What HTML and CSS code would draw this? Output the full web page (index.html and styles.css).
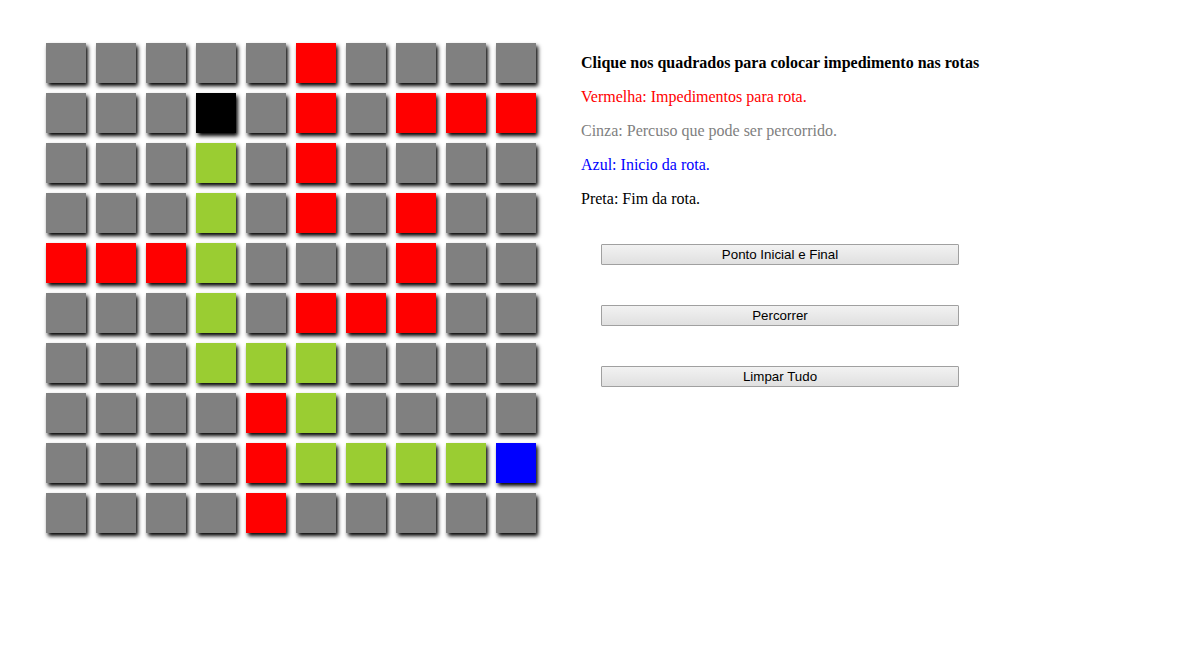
FILE: index.html
```html
<!DOCTYPE html>
<html>
<head>
<meta charset="utf-8">
<link rel="stylesheet" href="styles.css">
</head>
<body>
<div class="page">
  <div class="grid">
    <div class="cell g"></div><div class="cell g"></div><div class="cell g"></div><div class="cell g"></div><div class="cell g"></div><div class="cell r"></div><div class="cell g"></div><div class="cell g"></div><div class="cell g"></div><div class="cell g"></div>
    <div class="cell g"></div><div class="cell g"></div><div class="cell g"></div><div class="cell k"></div><div class="cell g"></div><div class="cell r"></div><div class="cell g"></div><div class="cell r"></div><div class="cell r"></div><div class="cell r"></div>
    <div class="cell g"></div><div class="cell g"></div><div class="cell g"></div><div class="cell p"></div><div class="cell g"></div><div class="cell r"></div><div class="cell g"></div><div class="cell g"></div><div class="cell g"></div><div class="cell g"></div>
    <div class="cell g"></div><div class="cell g"></div><div class="cell g"></div><div class="cell p"></div><div class="cell g"></div><div class="cell r"></div><div class="cell g"></div><div class="cell r"></div><div class="cell g"></div><div class="cell g"></div>
    <div class="cell r"></div><div class="cell r"></div><div class="cell r"></div><div class="cell p"></div><div class="cell g"></div><div class="cell g"></div><div class="cell g"></div><div class="cell r"></div><div class="cell g"></div><div class="cell g"></div>
    <div class="cell g"></div><div class="cell g"></div><div class="cell g"></div><div class="cell p"></div><div class="cell g"></div><div class="cell r"></div><div class="cell r"></div><div class="cell r"></div><div class="cell g"></div><div class="cell g"></div>
    <div class="cell g"></div><div class="cell g"></div><div class="cell g"></div><div class="cell p"></div><div class="cell p"></div><div class="cell p"></div><div class="cell g"></div><div class="cell g"></div><div class="cell g"></div><div class="cell g"></div>
    <div class="cell g"></div><div class="cell g"></div><div class="cell g"></div><div class="cell g"></div><div class="cell r"></div><div class="cell p"></div><div class="cell g"></div><div class="cell g"></div><div class="cell g"></div><div class="cell g"></div>
    <div class="cell g"></div><div class="cell g"></div><div class="cell g"></div><div class="cell g"></div><div class="cell r"></div><div class="cell p"></div><div class="cell p"></div><div class="cell p"></div><div class="cell p"></div><div class="cell b"></div>
    <div class="cell g"></div><div class="cell g"></div><div class="cell g"></div><div class="cell g"></div><div class="cell r"></div><div class="cell g"></div><div class="cell g"></div><div class="cell g"></div><div class="cell g"></div><div class="cell g"></div>
  </div>
  <div class="panel">
    <p class="title">Clique nos quadrados para colocar impedimento nas rotas</p>
    <p class="red">Vermelha: Impedimentos para rota.</p>
    <p class="gray">Cinza: Percuso que pode ser percorrido.</p>
    <p class="blue">Azul: Inicio da rota.</p>
    <p class="black">Preta: Fim da rota.</p>
    <div class="actions">
      <button class="btn">Ponto Inicial e Final</button>
      <button class="btn">Percorrer</button>
      <button class="btn">Limpar Tudo</button>
    </div>
  </div>
</div>
</body>
</html>
```
FILE: styles.css
```css
html, body {
  margin: 0;
  padding: 0;
  background: #fff;
}
body {
  font-family: "Liberation Serif", "Times New Roman", serif;
  font-size: 16px;
  color: #000;
  min-height: 660px;
}
.page {
  display: flex;
  align-items: flex-start;
  padding: 38px 0 40px 46px;
}
.grid {
  margin-top: 5px;
  display: grid;
  grid-template-columns: repeat(10, 40px);
  grid-auto-rows: 40px;
  gap: 10px;
}
.cell {
  width: 40px;
  height: 40px;
  box-shadow: 2px 3px 4px #000;
}
.g { background: #808080; }
.r { background: #ff0000; }
.p { background: #9acd32; }
.k { background: #000000; }
.b { background: #0000ff; }
.panel {
  margin-left: 45px;
  width: 420px;
}
.panel p {
  margin: 16px 0;
  line-height: 18px;
}
.title { font-weight: bold; }
.red { color: #ff0000; }
.gray { color: #808080; }
.blue { color: #0000ff; }
.black { color: #000; }
.actions {
  display: flex;
  flex-direction: column;
  gap: 40px;
  padding: 20px 0 0 20px;
}
.btn {
  display: block;
  width: 358px;
  height: 21px;
  margin: 0;
  padding: 0;
  font-family: "Liberation Sans", Arial, sans-serif;
  font-size: 13.33px;
  color: #000;
  border: 1px solid #a0a0a0;
  border-radius: 1px;
  background: linear-gradient(#f2f2f2, #e0e0e0);
}
```
